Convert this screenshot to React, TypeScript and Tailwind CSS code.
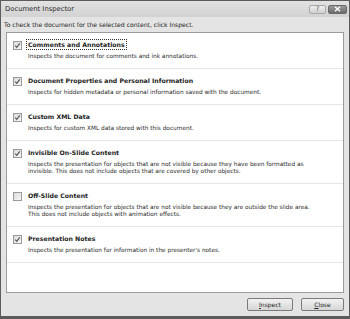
const items = [
  {
    title: 'Comments and Annotations',
    desc: ['Inspects the document for comments and ink annotations.'],
    checked: true,
    focus: true,
  },
  {
    title: 'Document Properties and Personal Information',
    desc: ['Inspects for hidden metadata or personal information saved with the document.'],
    checked: true,
  },
  {
    title: 'Custom XML Data',
    desc: ['Inspects for custom XML data stored with this document.'],
    checked: true,
  },
  {
    title: 'Invisible On-Slide Content',
    desc: [
      'Inspects the presentation for objects that are not visible because they have been formatted as',
      'invisible. This does not include objects that are covered by other objects.',
    ],
    checked: true,
  },
  {
    title: 'Off-Slide Content',
    desc: [
      'Inspects the presentation for objects that are not visible because they are outside the slide area.',
      'This does not include objects with animation effects.',
    ],
    checked: false,
  },
  {
    title: 'Presentation Notes',
    desc: ["Inspects the presentation for information in the presenter's notes."],
    checked: true,
  },
];

function CheckBox({ checked }: { checked: boolean }) {
  return (
    <div className="w-[9px] h-[9px] border border-[#9a9a9a] bg-gradient-to-br from-[#dcdcdc] to-[#f8f8f8] flex items-center justify-center shrink-0">
      {checked && (
        <svg width="7" height="7" viewBox="0 0 7 7">
          <path d="M1.2 3.6 L2.8 5.3 L5.8 1.3" fill="none" stroke="#555" strokeWidth="1.2" />
        </svg>
      )}
    </div>
  );
}

export default function App() {
  return (
    <div
      className="w-[350px] h-[319px] flex flex-col border border-[#5c5c5c] border-b-[3px] bg-[#e4e4e4] text-[#1e1e1e] overflow-hidden"
      style={{ fontFamily: '"DejaVu Sans", Verdana, sans-serif' }}
    >
      {/* Title bar */}
      <div className="h-[16px] flex items-center justify-between pl-[4px] pr-[2px] bg-gradient-to-b from-[#e2e2e2] to-[#d2d2d2] shrink-0">
        <span className="text-[6.8px] leading-[10px] text-[#2a2a2a]">Document Inspector</span>
        <div className="flex items-center gap-[2px]">
          <div className="w-[17px] h-[9px] border border-[#a8a8a8] rounded-[2px] bg-gradient-to-b from-[#efefef] to-[#cfcfcf] flex items-center justify-center text-[7px] leading-none text-[#6a6a6a]">
            ?
          </div>
          <div className="w-[19px] h-[9px] border border-[#6a6a6a] rounded-[2px] bg-gradient-to-b from-[#9a9a9a] to-[#6c6c6c] flex items-center justify-center">
            <svg width="7" height="6" viewBox="0 0 7 6">
              <path d="M1 0.8 L6 5.2 M6 0.8 L1 5.2" stroke="#fff" strokeWidth="1.4" />
            </svg>
          </div>
        </div>
      </div>

      {/* Instruction */}
      <div className="h-[15px] flex items-center px-[3px] text-[6.1px] leading-[8px] shrink-0">
        To check the document for the selected content, click Inspect.
      </div>

      {/* Panel */}
      <div className="mx-[5px] h-[261px] border border-[#9c9c9c] bg-white flex flex-col shrink-0">
        {items.map((item) => (
          <div key={item.title} className="flex gap-[5px] pl-[6px] pt-[6px] pb-[8px] border-b border-[#e6e6e6]">
            <div className="pt-[2px]">
              <CheckBox checked={item.checked} />
            </div>
            <div className="flex flex-col">
              <div className="h-[10px] flex items-center">
                <span
                  className={
                    'text-[6.2px] leading-[9px] font-bold px-[1px] ' +
                    (item.focus ? 'outline outline-1 outline-dotted outline-[#333]' : '')
                  }
                >
                  {item.title}
                </span>
              </div>
              <div className="mt-[4px] pl-[1px] text-[5.8px] leading-[7px] text-[#2a2a2a]">
                {item.desc.map((line) => (
                  <div key={line}>{line}</div>
                ))}
              </div>
            </div>
          </div>
        ))}
      </div>

      {/* Buttons */}
      <div className="flex-1 flex items-center justify-end gap-[8px] pr-[5px]">
        <button className="w-[46px] h-[13px] border border-[#7a7a7a] rounded-[2px] bg-gradient-to-b from-[#f2f2f2] to-[#d6d6d6] text-[6px] leading-none text-[#222]">
          <span className="underline">I</span>nspect
        </button>
        <button className="w-[43px] h-[13px] border border-[#7a7a7a] rounded-[2px] bg-gradient-to-b from-[#f2f2f2] to-[#d6d6d6] text-[6px] leading-none text-[#222]">
          <span className="underline">C</span>lose
        </button>
      </div>
    </div>
  );
}
